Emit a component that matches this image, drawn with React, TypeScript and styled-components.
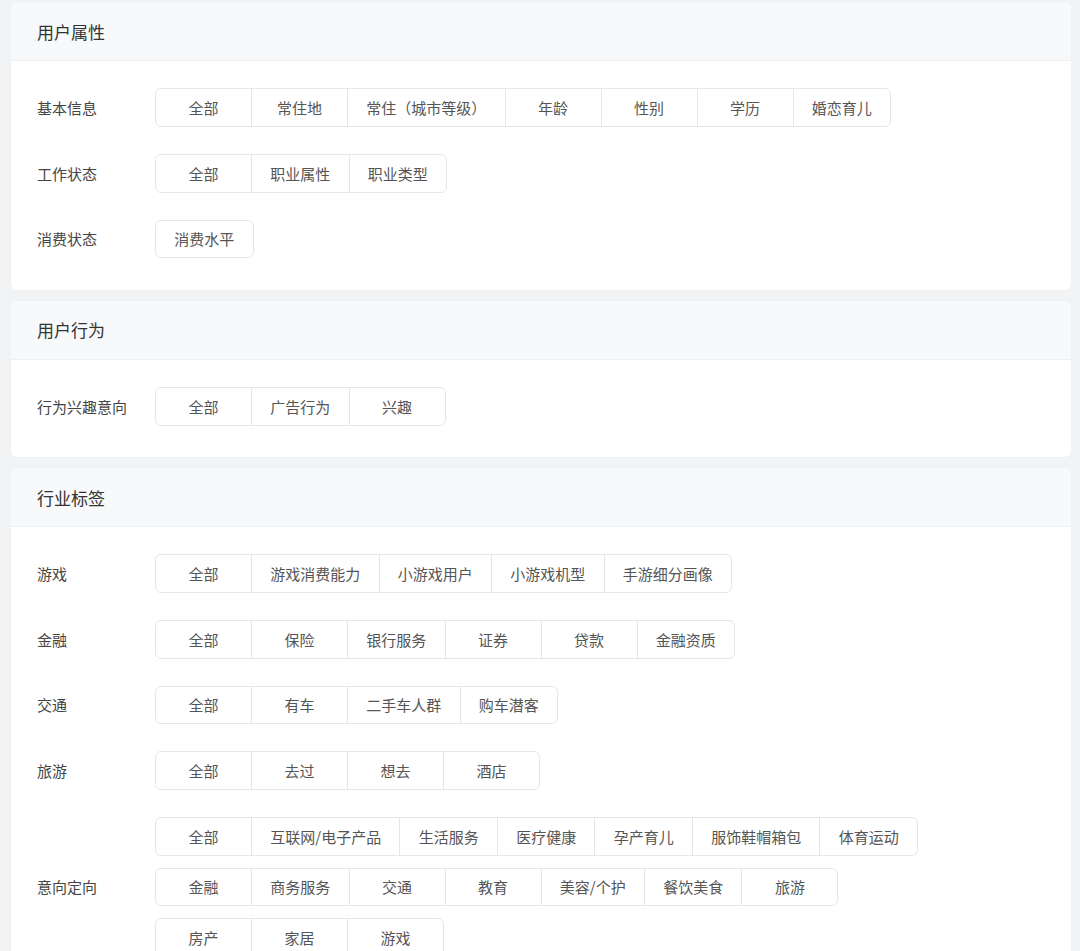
import React from "react";
import styled, { createGlobalStyle } from "styled-components";

const GlobalStyle = createGlobalStyle`
  html, body {
    margin: 0;
    padding: 0;
    background: #f2f3f5;
  }
  body {
    font-family: "Noto Sans CJK SC", "Noto Sans", sans-serif;
    color: #333;
  }
`;

const Page = styled.div`
  display: flex;
  flex-direction: column;
  gap: 11px;
  padding: 2px 9px 0 11px;
`;

const Card = styled.section`
  background: #ffffff;
  border-radius: 6px;
  box-shadow: 0 0 2px rgba(0, 0, 0, 0.04);
  overflow: hidden;
`;

const CardHeader = styled.div`
  height: 58px;
  display: flex;
  align-items: center;
  padding-left: 26px;
  background: #f8f9fa;
  border-bottom: 1px solid #eef0f2;
  font-size: 17px;
  color: #333;
`;

const CardBody = styled.div`
  display: flex;
  flex-direction: column;
  gap: 27px;
  padding: 27px 0 31.5px 26px;
`;

const Row = styled.div`
  display: flex;
  align-items: center;
`;

const Label = styled.div`
  width: 118px;
  flex: none;
  font-size: 15px;
  color: #444;
`;

const Groups = styled.div`
  display: flex;
  flex-direction: column;
  align-items: flex-start;
  gap: 11.75px;
`;

const Group = styled.div`
  display: inline-flex;
  border: 1px solid #e4e6e9;
  border-radius: 6px;
  overflow: hidden;
  background: #fff;
`;

const Tag = styled.button`
  box-sizing: border-box;
  height: 36.75px;
  min-width: 95px;
  padding: 0 18.25px;
  border: none;
  background: transparent;
  font-family: inherit;
  font-size: 15px;
  color: #555;
  white-space: nowrap;
  cursor: pointer;
  & + & {
    min-width: 96px;
    border-left: 1px solid #e4e6e9;
  }
`;

type RowData = { label: string; groups: string[][] };
type Section = { title: string; rows: RowData[] };

const sections: Section[] = [
  {
    title: "用户属性",
    rows: [
      {
        label: "基本信息",
        groups: [["全部", "常住地", "常住（城市等级）", "年龄", "性别", "学历", "婚恋育儿"]],
      },
      { label: "工作状态", groups: [["全部", "职业属性", "职业类型"]] },
      { label: "消费状态", groups: [["消费水平"]] },
    ],
  },
  {
    title: "用户行为",
    rows: [{ label: "行为兴趣意向", groups: [["全部", "广告行为", "兴趣"]] }],
  },
  {
    title: "行业标签",
    rows: [
      {
        label: "游戏",
        groups: [["全部", "游戏消费能力", "小游戏用户", "小游戏机型", "手游细分画像"]],
      },
      {
        label: "金融",
        groups: [["全部", "保险", "银行服务", "证券", "贷款", "金融资质"]],
      },
      { label: "交通", groups: [["全部", "有车", "二手车人群", "购车潜客"]] },
      { label: "旅游", groups: [["全部", "去过", "想去", "酒店"]] },
      {
        label: "意向定向",
        groups: [
          ["全部", "互联网/电子产品", "生活服务", "医疗健康", "孕产育儿", "服饰鞋帽箱包", "体育运动"],
          ["金融", "商务服务", "交通", "教育", "美容/个护", "餐饮美食", "旅游"],
          ["房产", "家居", "游戏"],
        ],
      },
    ],
  },
];

export default function App() {
  return (
    <>
      <GlobalStyle />
      <Page>
        {sections.map((s) => (
          <Card key={s.title}>
            <CardHeader>{s.title}</CardHeader>
            <CardBody>
              {s.rows.map((r) => (
                <Row key={r.label}>
                  <Label>{r.label}</Label>
                  <Groups>
                    {r.groups.map((g, i) => (
                      <Group key={i}>
                        {g.map((t) => (
                          <Tag key={t}>{t}</Tag>
                        ))}
                      </Group>
                    ))}
                  </Groups>
                </Row>
              ))}
            </CardBody>
          </Card>
        ))}
      </Page>
    </>
  );
}
